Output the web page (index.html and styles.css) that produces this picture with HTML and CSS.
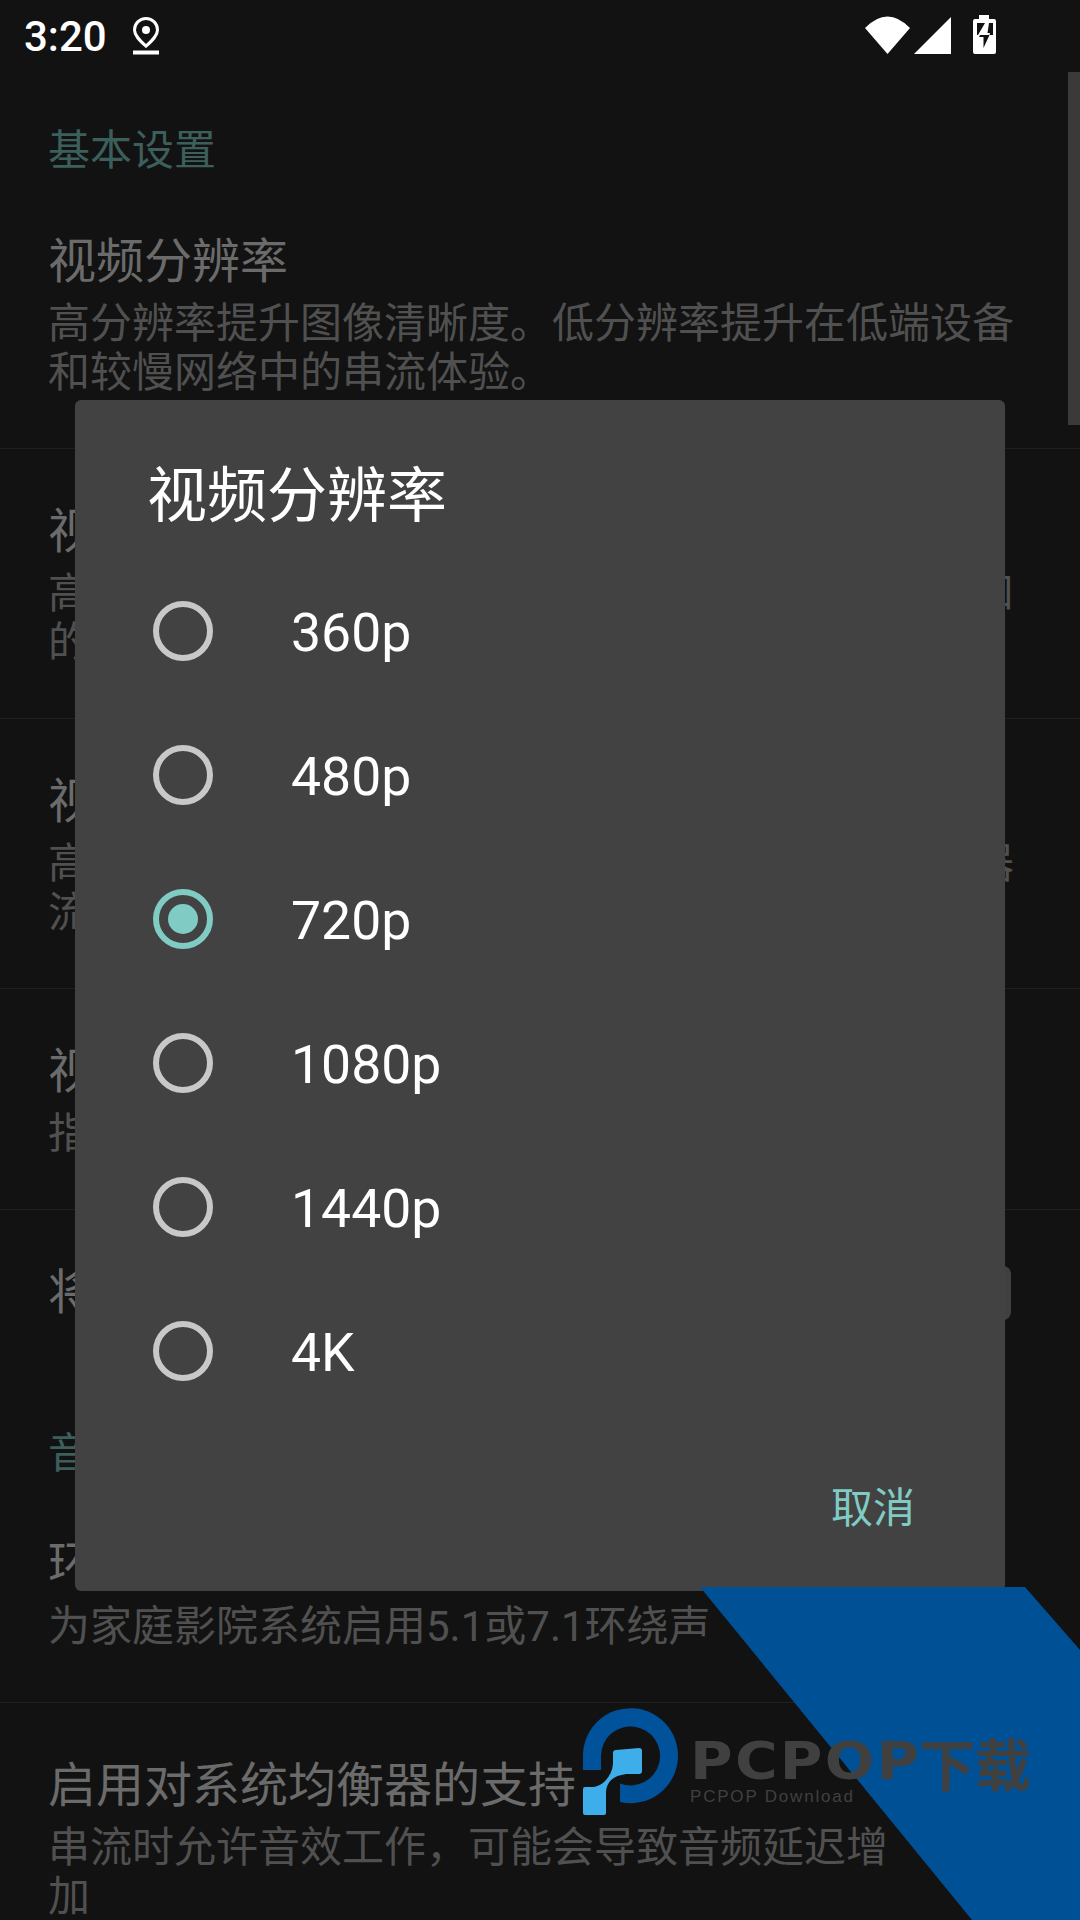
FILE: index.html
```html
<!DOCTYPE html>
<html>
<head>
    <title>视频分辨率</title>
    <meta charset='utf-8'>
    <meta name="viewport" content="width=device-width, initial-scale=1.0">
    <link rel="stylesheet" href="styles.css">
</head>
<body>
    <div class="status-bar">
        <div class="status-left">
            <span class="clock">3:20</span>
            <svg class="icon-pin" width="26" height="38" viewBox="0 0 26 38">
                <path d="M13 1.5C6.4 1.5 1.5 6.6 1.5 13c0 5.2 4.6 10 11.5 16.2C19.900 23 24.500 18.200 24.500 13 24.500 6.600 19.600 1.500 13 1.500Z" fill="none" stroke="#fff" stroke-width="3"/>
                <circle cx="13" cy="13" r="4" fill="#fff"/>
                <rect x="0" y="33.500" width="26" height="4" fill="#fff"/>
            </svg>
        </div>
        <div class="status-right">
            <svg class="icon-wifi" width="45" height="38" viewBox="0 0 45 38">
                <path d="M0 12Q22.500 -11 45 12L22.500 38Z" fill="#fff"/>
            </svg>
            <svg class="icon-signal" width="37" height="37" viewBox="0 0 37 37">
                <polygon points="0,37 37,0 37,37" fill="#fff"/>
            </svg>
            <svg class="icon-battery" width="23" height="39" viewBox="0 0 23 39">
                <path d="M6 0H16V4H21Q23 4 23 6V37Q23 39 21 39H2Q0 39 0 37V6Q0 4 2 4H6Z" fill="#fff"/>
                <rect x="4" y="8" width="16" height="12" fill="#121212"/>
                <polygon points="12,8 16,8 14.500,18 17,18 16.500,20 4,20 5,20" fill="#fff"/>
                <polygon points="6,22 7,20 16.500,20 10.500,33 10.500,22" fill="#121212"/>
            </svg>
        </div>
    </div>

    <div class="settings-list">
        <div class="section-title">基本设置</div>
        <div class="pref-row">
            <div class="pref-text">
                <div class="pref-title">视频分辨率</div>
                <div class="pref-summary">高分辨率提升图像清晰度。低分辨率提升在低端设备和较慢网络中的串流体验。</div>
            </div>
        </div>
        <div class="pref-row">
            <div class="pref-text">
                <div class="pref-title">视频帧率</div>
                <div class="pref-summary">高帧率可让串流更流畅。六十帧足以应付多数设备和的显示需求。</div>
            </div>
        </div>
        <div class="pref-row">
            <div class="pref-text">
                <div class="pref-title">视频比特率</div>
                <div class="pref-summary">高比特率提升图像质量。降低比特率可以改善路由器流量较低时的串流体验。</div>
            </div>
        </div>
        <div class="pref-row">
            <div class="pref-text">
                <div class="pref-title">视频编解码器</div>
                <div class="pref-summary">指定串流使用的编解码器。</div>
            </div>
        </div>
        <div class="pref-row pref-row-plain">
            <div class="pref-text">
                <div class="pref-title">将帧率限制为屏幕刷新率</div>
            </div>
            <div class="pref-widget"></div>
        </div>
        <div class="section-title">音频设置</div>
        <div class="pref-row">
            <div class="pref-text">
                <div class="pref-title">环绕声</div>
                <div class="pref-summary">为家庭影院系统启用5.1或7.1环绕声</div>
            </div>
        </div>
        <div class="pref-row pref-row-narrow">
            <div class="pref-text">
                <div class="pref-title">启用对系统均衡器的支持</div>
                <div class="pref-summary">串流时允许音效工作，可能会导致音频延迟增加</div>
            </div>
        </div>
    </div>
    <div class="scrollbar"></div>

    <div class="dialog">
        <div class="dialog-title">视频分辨率</div>
        <div class="option"><span class="radio"></span><span class="option-label">360p</span></div>
        <div class="option"><span class="radio"></span><span class="option-label">480p</span></div>
        <div class="option"><span class="radio radio-on"></span><span class="option-label">720p</span></div>
        <div class="option"><span class="radio"></span><span class="option-label">1080p</span></div>
        <div class="option"><span class="radio"></span><span class="option-label">1440p</span></div>
        <div class="option"><span class="radio"></span><span class="option-label">4K</span></div>
        <div class="dialog-actions"><span class="dialog-cancel">取消</span></div>
    </div>

    <!-- 水印 -->
    <svg class="wm-banner" width="380" height="333" viewBox="0 0 380 333">
        <polygon points="0,0 325,0 380,63 380,333 272,333" fill="#005095"/>
    </svg>
    <div class="wm-logo">
        <svg class="wm-mark" width="96" height="110" viewBox="0 0 96 110">
            <path d="M0 62V47.500A47.500 47.500 0 1 1 37 94V75.500A29.500 29.500 0 1 0 18 47.500V62Z" fill="#00529b"/>
            <path d="M33 42L56 40Q59 40 59 43V63Q59 66 56 66H44C34 67 24 71 23 84V105Q23 107 21 107H2Q0 107 0 105V81Q0 79 2 79H10C20 78 29 68 30 56V45Q30 42 33 42Z" fill="#3daee9"/>
        </svg>
        <div class="wm-text">
            <div class="wm-name"><span class="wm-name-en">PCPOP</span><span class="wm-name-cn">下载</span></div>
            <div class="wm-sub">PCPOP Download</div>
        </div>
    </div>
</body>
</html>
```

FILE: styles.css
```css
html, body {
    margin: 0;
    height: 1920px;
    overflow: hidden;
}
body {
    position: relative;
    width: 1080px;
    background: #121212;
    font-family: Roboto, "Noto Sans CJK SC", sans-serif;
}
.status-bar {
    height: 72px;
    display: flex;
    justify-content: space-between;
    align-items: flex-start;
    padding: 0 84px 0 24px;
    box-sizing: border-box;
}
.status-left {
    display: flex;
    align-items: flex-start;
}
.clock {
    color: #fff;
    font-size: 42px;
    font-weight: 500;
    line-height: 50px;
    margin-top: 12px;
}
.icon-pin {
    margin: 17px 0 0 26px;
}
.status-right {
    display: flex;
    align-items: flex-start;
}
.icon-wifi {
    margin-top: 16px;
}
.icon-signal {
    margin: 17px 0 0 4px;
}
.icon-battery {
    margin: 15px 0 0 22px;
}
.section-title {
    height: 53px;
    padding: 54px 48px 0;
    color: #3c5f5c;
    font-size: 42px;
    line-height: 50px;
}
.pref-row {
    display: flex;
    align-items: center;
    justify-content: space-between;
    padding: 55px 66px 51px 48px;
    border-bottom: 1px solid #1f1f1f;
}
.pref-row-plain {
    height: 165px;
    padding-top: 0;
    padding-bottom: 0;
    padding-right: 69px;
    border-bottom: none;
}
.pref-row-narrow {
    padding-right: 172px;
}
.pref-title {
    color: #6b6b6b;
    font-size: 48px;
    line-height: 56px;
}
.pref-summary {
    margin-top: 9px;
    color: #505050;
    font-size: 42px;
    line-height: 49px;
}
.pref-widget {
    width: 54px;
    height: 54px;
    border-radius: 8px;
    background: #404040;
}
.scrollbar {
    position: absolute;
    top: 72px;
    right: 0;
    width: 12px;
    height: 353px;
    background: #3a3a3a;
}
.dialog {
    position: absolute;
    left: 75px;
    top: 400px;
    width: 930px;
    height: 1191px;
    border-radius: 6px;
    background: #424242;
}
.dialog-title {
    height: 159px;
    padding-left: 72px;
    box-sizing: border-box;
    color: #fff;
    font-size: 60px;
    line-height: 194px;
}
.option {
    display: flex;
    align-items: center;
    height: 144px;
    padding-left: 78px;
}
.radio {
    position: relative;
    width: 60px;
    height: 60px;
    box-sizing: border-box;
    border: 6px solid #c8c8c8;
    border-radius: 50%;
}
.radio-on {
    border-color: #80cbc4;
}
.radio-on::after {
    content: "";
    position: absolute;
    left: 9px;
    top: 9px;
    width: 30px;
    height: 30px;
    border-radius: 50%;
    background: #80cbc4;
}
.option-label {
    margin: 2px 0 0 78px;
    color: #fff;
    font-size: 53.5px;
}
.dialog-actions {
    display: flex;
    justify-content: flex-end;
    padding: 61px 90px 0 0;
}
.dialog-cancel {
    color: #80cbc4;
    font-size: 42px;
    line-height: 50px;
}
.wm-banner {
    position: absolute;
    left: 700px;
    top: 1587px;
}
.wm-logo {
    position: absolute;
    left: 583px;
    top: 1708px;
    display: flex;
    align-items: flex-start;
}
.wm-text {
    margin: 25px 0 0 11px;
    color: #404040;
}
.wm-name {
    display: flex;
    height: 54px;
    line-height: 58px;
    white-space: nowrap;
}
.wm-name-en {
    width: 228px;
    font-family: "DejaVu Sans", sans-serif;
    font-weight: bold;
    font-size: 51px;
    letter-spacing: 2px;
    transform: scaleX(1.14);
    transform-origin: left center;
}
.wm-name-cn {
    margin-left: 1px;
    font-family: "Noto Sans CJK SC", sans-serif;
    font-weight: bold;
    font-size: 56px;
}
.wm-sub {
    font-family: "Liberation Sans", sans-serif;
    font-size: 17px;
    line-height: 20px;
    letter-spacing: 1.8px;
    white-space: nowrap;
}
```
